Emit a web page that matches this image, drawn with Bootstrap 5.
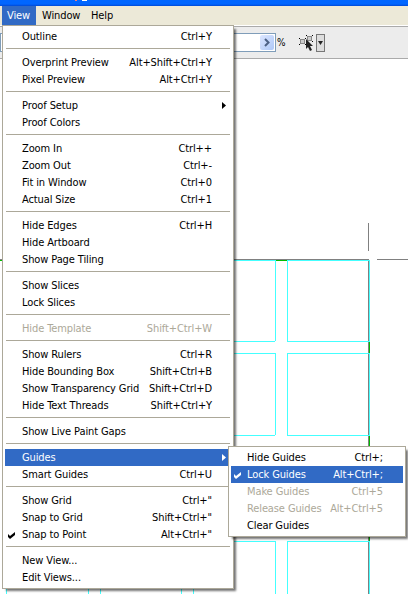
<!DOCTYPE html>
<html lang="en"><head><meta charset="utf-8"><title>View menu</title>
<link href="https://cdn.jsdelivr.net/npm/bootstrap@5.3.0/dist/css/bootstrap.min.css" rel="stylesheet">
<style>
html,body{height:594px;overflow:hidden}
body{width:408px;background:#fff;color:#000;font:11px/17px "DejaVu Sans Condensed","DejaVu Sans",sans-serif;font-stretch:condensed;letter-spacing:-.11px}
.titlebar{height:6px;background:linear-gradient(#0066ff 0 4px,#0049d4)}
.menubar{height:19px;background:#ece9d8;padding-left:2px}
.menubar span{height:19px;line-height:20px}
.m-view{width:34px;padding-left:5px;background:#316ac5;color:#fff}
.m-win{width:49px;padding-left:6px}.m-help{padding-left:6px}
.toolbar{height:34px;background:#ececec;border-top:1px solid #fff;border-bottom:1px solid #aaa;box-shadow:inset 0 1px #aaa}
.zoombox{width:276px;height:19px;border:1px solid #7f9db9;background:#fff;margin-top:1px;padding:1px}
.zoombtn{width:14px;height:15px;border-radius:2px;background:linear-gradient(135deg,#dce6ff,#aec8f7)}
.pct{margin-left:1px;font-size:10px;letter-spacing:0}
.canvas{position:absolute;left:0;top:0}
.popmenu{position:absolute;background:#fff;border:1px solid #aca899;padding:2px;box-shadow:3px 3px 2px -1px rgba(0,0,0,.55)}
.main{left:2px;top:25px;width:232px;height:564px}
.sub{left:228px;top:446px;width:178px;height:91px}
.mi{height:17px;line-height:18px;padding:0 19px 0 17px;position:relative;white-space:nowrap}
.sub .mi{padding:0 20px 0 16px}
.mi svg{position:absolute}
.arrow{right:5px;top:5px}.check{left:3px;top:6px}
.active-mi{background:#316ac5;color:#fff}.off{color:#aca899}
.sep{height:9px;padding:3px 1px 0}.sep:before{content:"";display:block;height:1px;background:#aca899}
</style>
<script src="https://cdn.jsdelivr.net/npm/bootstrap@5.3.0/dist/js/bootstrap.bundle.min.js"></script>
</head><body>
<div class="titlebar"></div>
<nav class="menubar d-flex"><span class="m-view">View</span><span class="m-win">Window</span><span class="m-help">Help</span></nav>
<div class="toolbar d-flex align-items-center">
<div class="zoombox d-flex justify-content-end"><div class="zoombtn d-flex align-items-center justify-content-center"><svg width="8" height="9"><path d="M2 1l3.500 3.500L2 8" fill="none" stroke="#4d6185" stroke-width="2"/></svg></div></div>
<span class="pct">%</span>
</div>
<svg class="canvas" width="408" height="594" shape-rendering="crispEdges">
<path d="M368.500 223V251M377 259.500H408M0 259.500H369M368.500 259V594" stroke="#808080" fill="none"/>
<path d="M234 260.500H370M275.500 260V341M287.500 260V342M234 341.500H275M287 341.500H370M234 353.500H276M287 353.500H370M275.500 353V435M287.500 353V436M234 435.500H275M287 435.500H370M369.500 260V594M234 541.500H276M287 541.500H370M275.500 541V594M287.500 541V594M6.500 588V594M88.500 588V594M100.500 588V594M181.500 588V594M193.500 588V594" stroke="#4ff" fill="none"/>
<path d="M0 260.500H2M276 260.500H287M369.500 342V353M369.500 436V447M369.500 529V541" stroke="#0b0" fill="none"/>
<path d="M75 0h2v1h-2z" fill="#f08080"/><path d="M82 0h5v1h-5z" fill="#fff"/>
<path d="M300.500 39.500h4v4h-4zM307.500 36.500h4v4h-4z" fill="#ccc" stroke="#888"/><path d="M299 38h1v1h-1zM305 38h1v1h-1zM299 44h1v1h-1zM305 44h1v1h-1zM306 35h1v1h-1zM312 35h1v1h-1zM312 41h1v1h-1z"/><path d="M306 39v10l2-2 2 4 2-1-2-4h3z" fill="#222" shape-rendering="auto"/>
<path d="M316.500 34.500h8v17h-8z" fill="#ddd" stroke="#777"/><path d="M318 41h5l-2.500 4z" fill="#222" shape-rendering="auto"/>
</svg>
<div id="main" class="popmenu main"></div>
<div id="sub" class="popmenu sub"></div>
<script>
const arrow='<svg class="arrow" width="4" height="7"><path d="M0 0l4 3.500L0 7z" fill="currentColor"/></svg>';
const check='<svg class="check" width="7" height="7"><path d="M0 2l2 2 5-4v3L2 7 0 5z" fill="currentColor"/></svg>';
const build=(id,rows)=>document.getElementById(id).innerHTML=rows.map(r=>r?`<div class="mi d-flex justify-content-between ${r[2]||''}"><span>${r[0]}</span><span>${r[1]||''}</span>${r[3]||''}</div>`:'<div class="sep"></div>').join('');
build('main',[['Outline','Ctrl+Y'],0,['Overprint Preview','Alt+Shift+Ctrl+Y'],['Pixel Preview','Alt+Ctrl+Y'],0,['Proof Setup','','',arrow],['Proof Colors'],0,['Zoom In','Ctrl++'],['Zoom Out','Ctrl+-'],['Fit in Window','Ctrl+0'],['Actual Size','Ctrl+1'],0,['Hide Edges','Ctrl+H'],['Hide Artboard'],['Show Page Tiling'],0,['Show Slices'],['Lock Slices'],0,['Hide Template','Shift+Ctrl+W','off'],0,['Show Rulers','Ctrl+R'],['Hide Bounding Box','Shift+Ctrl+B'],['Show Transparency Grid','Shift+Ctrl+D'],['Hide Text Threads','Shift+Ctrl+Y'],0,['Show Live Paint Gaps'],0,['Guides','','active-mi',arrow],['Smart Guides','Ctrl+U'],0,['Show Grid','Ctrl+"'],['Snap to Grid','Shift+Ctrl+"'],['Snap to Point','Alt+Ctrl+"','',check],0,['New View...'],['Edit Views...']]);
build('sub',[['Hide Guides','Ctrl+;'],['Lock Guides','Alt+Ctrl+;','active-mi',check],['Make Guides','Ctrl+5','off'],['Release Guides','Alt+Ctrl+5','off'],['Clear Guides']]);
</script>
</body></html>
